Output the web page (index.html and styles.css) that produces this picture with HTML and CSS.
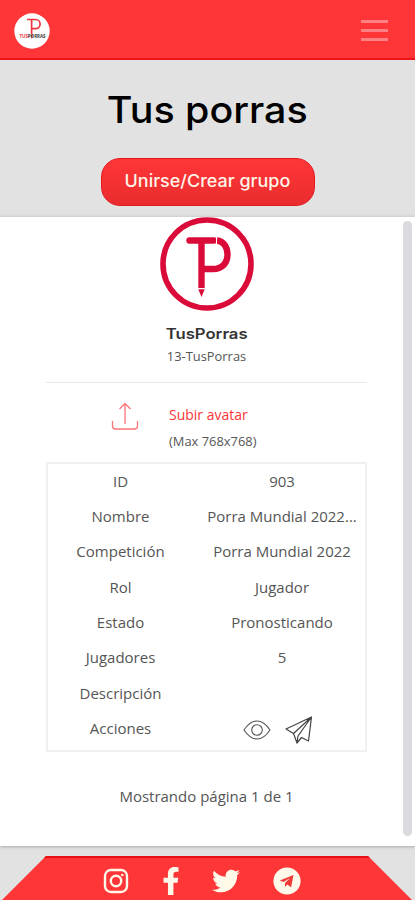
FILE: index.html
```html
<!DOCTYPE html>
<html lang="es">
<head>
<meta charset="utf-8">
<title>Tus porras</title>
<link rel="stylesheet" href="styles.css">
</head>
<body>
<header class="navbar">
  <svg class="brand" viewBox="0 0 36 36">
    <circle cx="18" cy="18" r="17.7" fill="#fff"/>
    <g fill="none" stroke="#ed3540" stroke-width="1.7"><path d="M13 6.500h8.500a4.600 4.600 0 0 1 0 9.200h-3.500M17.600 7v14"/></g>
    <path d="M16.500 22h2.400l-1.200 4z" fill="#ed3540"/>
    <text x="5.500" y="24.500" class="brand-text" textLength="26" lengthAdjust="spacingAndGlyphs"><tspan fill="#ed3540">TUS</tspan>PORRAS</text>
  </svg>
  <div class="toggler"><span></span><span></span><span></span></div>
</header>
<main>
  <h1><span>Tus porras</span></h1>
  <a class="join"><span>Unirse/Crear grupo</span></a>
  <section class="card">
    <div class="content">
      <svg class="avatar" viewBox="0 0 94 94">
        <circle cx="47" cy="47" r="44" fill="none" stroke="#da0b38" stroke-width="5.600"/>
        <g fill="none" stroke="#da0b38" stroke-width="6.400">
          <path d="M29.500 23.500H54" stroke-linecap="round"/>
          <path d="M41.500 24v47"/>
          <path d="M57 23.500C63.500 24 67.500 30 67.500 37.500C67.500 46 62 52 53 52H44"/>
        </g>
        <path d="M56.500 19.500v8" stroke="#fff"/>
        <path d="M38.300 72.200h6.400l-3.200 7.800z" fill="#da0b38"/>
      </svg>
      <h2>TusPorras</h2>
      <p class="handle">13-TusPorras</p>
      <div class="upload">
        <svg class="upload-icon" viewBox="0 0 28 30" fill="none" stroke="#fa7478" stroke-width="1.300" stroke-linejoin="round">
          <path d="M14 23V2.500M8.500 8L14 2.500 19.500 8M1.500 20v5q0 3 3 3h19q3 0 3-3v-5"/>
        </svg>
        <div class="upload-text"><a>Subir avatar</a><p>(Max 768x768)</p></div>
      </div>
      <div class="table">
        <div class="row"><span>ID</span><span>903</span></div>
        <div class="row"><span>Nombre</span><span>Porra Mundial 2022...</span></div>
        <div class="row"><span>Competición</span><span>Porra Mundial 2022</span></div>
        <div class="row"><span>Rol</span><span>Jugador</span></div>
        <div class="row"><span>Estado</span><span>Pronosticando</span></div>
        <div class="row"><span>Jugadores</span><span>5</span></div>
        <div class="row"><span>Descripción</span><span></span></div>
        <div class="row"><span>Acciones</span>
          <div class="actions">
            <svg width="28" height="28" viewBox="0 0 28 28" fill="none" stroke="#555" stroke-width="1.100"><path d="M1 14Q7 5 14 5T27 14Q21 23 14 23T1 14Z"/><circle cx="14" cy="14" r="5.300"/></svg>
            <svg width="28" height="28" viewBox="0 0 28 28" fill="none" stroke="#444" stroke-width="1.200" stroke-linejoin="round"><path d="M26.500 1L1 13l7.500 4.500L26.500 1 13 20M26.500 1L23.500 25l-7-3.500L12 27 8.500 17.500M12 27l1-7L26.500 1"/></svg>
          </div>
        </div>
      </div>
      <p class="paging">Mostrando página 1 de 1</p>
    </div>
    <div class="scrollbar"></div>
  </section>
</main>
<footer>
  <svg class="footer-shape" viewBox="0 0 415 44"><path d="M46 0H368L412 44H2Z" fill="#ff3638"/><path d="M46 0H368L370 2H44Z" fill="#eb1014"/></svg>
  <nav class="social">
    <svg width="26" height="28" viewBox="0 0 26 28" fill="none" stroke="#fff9e9" stroke-width="2.400"><rect x="2" y="3" width="22" height="22" rx="6"/><circle cx="13" cy="14" r="5.200"/><circle cx="19.300" cy="8" r="1.300" fill="#fff9e9" stroke="none"/></svg>
    <svg width="18" height="28" viewBox="0 0 320 512" fill="#fff9e9"><path d="M279.140 288l14.220-92.660h-88.910v-60.130c0-25.350 12.420-50.060 52.240-50.060h40.420V6.260S260.430 0 225.360 0c-73.220 0-121.080 44.380-121.080 124.720v70.620H22.890V288h81.390v224h100.170V288z"/></svg>
    <svg width="28" height="28" viewBox="0 0 512 512" fill="#fff9e9"><path d="M459.370 151.716c.325 4.548.325 9.097.325 13.645 0 138.720-105.583 298.558-298.558 298.558-59.452 0-114.680-17.219-161.137-47.106 8.447.974 16.568 1.299 25.340 1.299 49.055 0 94.213-16.568 130.274-44.832-46.132-.975-84.792-31.188-98.112-72.772 6.498.974 12.995 1.624 19.818 1.624 9.421 0 18.843-1.300 27.614-3.573-48.081-9.747-84.143-51.980-84.143-102.985v-1.299c13.969 7.797 30.214 12.670 47.431 13.319-28.264-18.843-46.781-51.005-46.781-87.391 0-19.492 5.197-37.360 14.294-52.954 51.655 63.675 129.300 105.258 216.365 109.807-1.624-7.797-2.599-15.918-2.599-24.040 0-57.828 46.782-104.934 104.934-104.934 30.213 0 57.502 12.670 76.670 33.137 23.715-4.548 46.456-13.320 66.599-25.340-7.798 24.366-24.366 44.833-46.132 57.827 21.117-2.273 41.584-8.122 60.426-16.243-14.292 20.791-32.161 39.308-52.628 54.253z"/></svg>
    <svg width="28" height="28" viewBox="0 0 28 28"><circle cx="14" cy="14" r="13.600" fill="#fff9e9"/><path d="M20.500 8L6.800 13.400l3.800 1.500L17 11l-5 5v4l2.300-2.400 3.800 2.700z" fill="#ef3b37"/></svg>
  </nav>
</footer>
</body>
</html>
```
FILE: styles.css
```css
* { box-sizing: border-box; margin: 0; padding: 0; }
body {
  height: 900px;
  overflow: hidden;
  display: flex;
  flex-direction: column;
  background: #e2e2e2;
  color: #555;
  font: 15px/20px "Open Sans", sans-serif;
}
svg { display: block; flex: none; }
.navbar {
  height: 60px;
  padding: 0 27px 0 14px;
  display: flex;
  justify-content: space-between;
  align-items: center;
  background: #ff3638;
  border-bottom: 2px solid #f01216;
}
.brand { width: 36px; height: 36px; margin-top: 3px; }
.brand-text { font: bold 5px "Open Sans", sans-serif; fill: #333; }
.toggler { width: 27px; display: grid; gap: 6px; margin-top: 3px; }
.toggler span { height: 3px; background: #ff8082; }
main { height: 786px; display: flex; flex-direction: column; align-items: center; }
h1 {
  height: 98px;
  padding-top: 25px;
  color: #000;
  font: 500 37px/50px Inter, sans-serif;
  white-space: nowrap;
}
h1 span { display: inline-block; transform: scaleX(1.065); }
.join {
  width: 214px;
  height: 48px;
  display: flex;
  justify-content: center;
  padding-top: 12px;
  border: 1px solid #e5171b;
  border-radius: 19px;
  background: linear-gradient(#ff3638, #e92c2e);
  color: #fff5e9;
  font: 500 17px/20px Inter, sans-serif;
  white-space: nowrap;
}
.join span { height: 20px; transform: scaleX(1.057); }
.card {
  width: 415px;
  height: 630px;
  margin-top: 10px;
  display: flex;
  justify-content: space-between;
  background: #fff;
  border-top: 1px solid #d3d3d3;
  box-shadow: 0 1px 3px #aaa;
}
.content {
  width: 321px;
  margin-left: 46px;
  display: flex;
  flex-direction: column;
  align-items: center;
}
.avatar { width: 94px; height: 94px; }
h2 {
  margin-top: 13px;
  color: #333;
  font: 600 14.500px/20px Inter, sans-serif;
  transform: scaleX(1.150);
}
.handle { margin-top: 2px; font-size: 12.900px; line-height: 20px; }
.upload {
  width: 321px;
  height: 80px;
  margin-top: 16px;
  padding: 18px 0 0 65px;
  display: flex;
  gap: 30px;
  border-top: 1px solid #e9e9e9;
}
.upload-icon { width: 28px; height: 30px; }
.upload-text { font-size: 12.900px; line-height: 26px; margin-top: 1px; }
.upload-text a { color: #fb3438; font-size: 14px; display: block; }
.table { width: 321px; height: 290px; border: 2px solid #f0f0f0; }
.row {
  height: 35.300px;
  padding-bottom: 1.500px;
  display: grid;
  grid-template-columns: 145px 168px;
  column-gap: 5px;
  align-items: center;
  text-align: center;
  white-space: nowrap;
}
.actions { display: flex; justify-content: center; gap: 14px; padding: 4px 8px 0 0; }
.paging { margin-top: 34px; }
.scrollbar { width: 9px; height: 615px; margin: 4px 3px 0 0; border-radius: 5px; background: #d9dbde; }
footer { height: 54px; padding-top: 10px; position: relative; }
.footer-shape { width: 415px; height: 44px; }
.social {
  position: absolute;
  left: 103px;
  top: 21px;
  width: 198px;
  display: flex;
  justify-content: space-between;
}
```
